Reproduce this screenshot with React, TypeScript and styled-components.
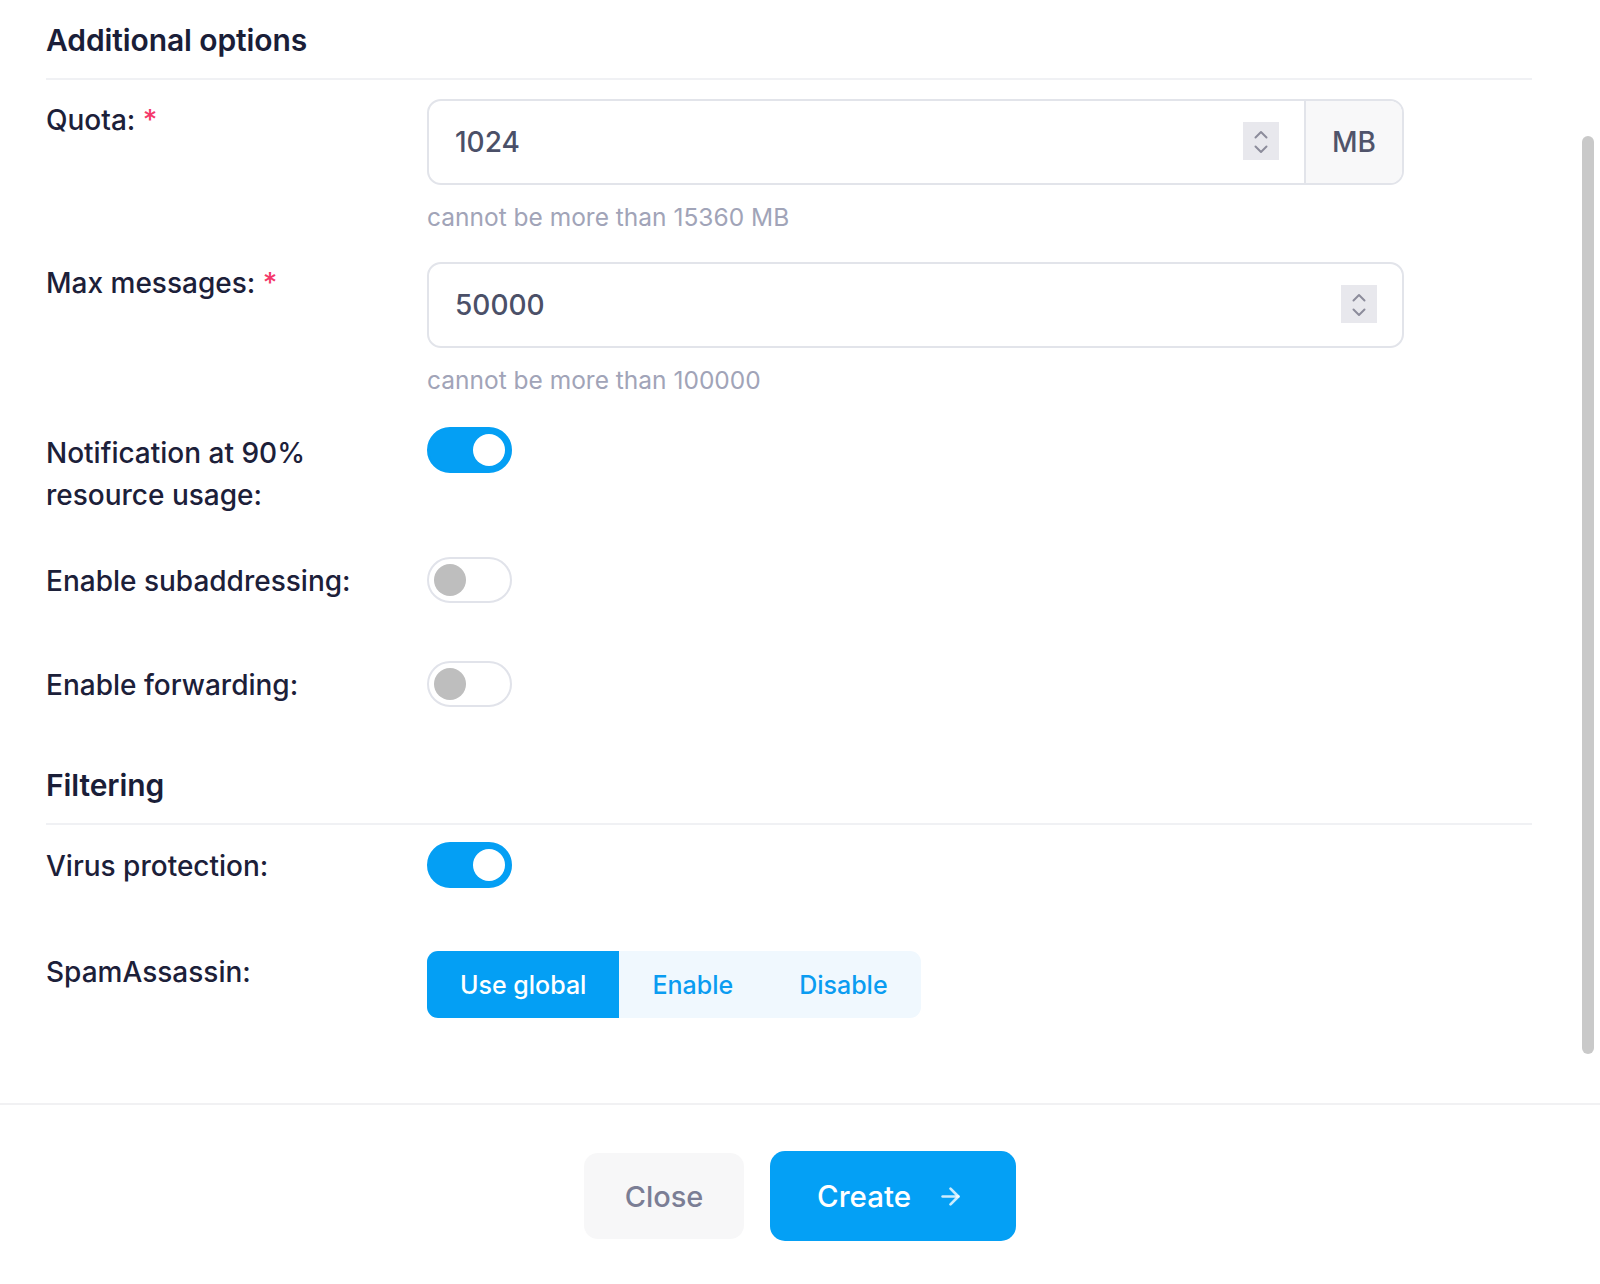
import styled, { createGlobalStyle } from "styled-components";
import { ArrowRight } from "lucide-react";

const GlobalStyle = createGlobalStyle`
  html, body {
    margin: 0;
    padding: 0;
    background: #ffffff;
  }
  body {
    font-family: Inter, "Noto Sans", sans-serif;
    color: #1b1f3b;
  }
  * {
    box-sizing: border-box;
  }
`;

function Spinner() {
  return (
    <SpinnerBox>
      <svg width="16" height="40" viewBox="0 0 16 40" fill="none">
        <path d="M2.5 16.5L8 11l5.5 5.5" stroke="#8c8c9b" strokeWidth="2" strokeLinecap="round" strokeLinejoin="round" />
        <path d="M2.5 25.5L8 31l5.5-5.5" stroke="#8c8c9b" strokeWidth="2" strokeLinecap="round" strokeLinejoin="round" />
      </svg>
    </SpinnerBox>
  );
}

function Toggle({ on }: { on: boolean }) {
  return (
    <Switch $on={on}>
      <Knob $on={on} />
    </Switch>
  );
}

function App() {
  return (
    <>
      <GlobalStyle />
      <Modal>
        <Body>
          <SectionHeader $mt={0}>Additional options</SectionHeader>

          <FormRow $mt={19}>
            <Label $pt={0}>
              Quota: <Required>*</Required>
            </Label>
            <Field>
              <InputGroup>
                <InputBox>
                  <ValueInput readOnly value="1024" />
                  <Spinner />
                </InputBox>
                <Addon>MB</Addon>
              </InputGroup>
              <Hint>cannot be more than 15360 MB</Hint>
            </Field>
          </FormRow>

          <FormRow $mt={28}>
            <Label $pt={0}>
              Max messages: <Required>*</Required>
            </Label>
            <Field>
              <InputGroup>
                <InputBox>
                  <ValueInput readOnly value="50000" />
                  <Spinner />
                </InputBox>
              </InputGroup>
              <Hint>cannot be more than 100000</Hint>
            </Field>
          </FormRow>

          <FormRow $mt={30}>
            <Label $pt={5}>Notification at 90% resource usage:</Label>
            <Field>
              <Toggle on />
            </Field>
          </FormRow>

          <FormRow $mt={41}>
            <Label $pt={3}>Enable subaddressing:</Label>
            <Field>
              <Toggle on={false} />
            </Field>
          </FormRow>

          <FormRow $mt={58}>
            <Label $pt={3}>Enable forwarding:</Label>
            <Field>
              <Toggle on={false} />
            </Field>
          </FormRow>

          <SectionHeader $mt={58}>Filtering</SectionHeader>

          <FormRow $mt={17}>
            <Label $pt={3}>Virus protection:</Label>
            <Field>
              <Toggle on />
            </Field>
          </FormRow>

          <FormRow $mt={63}>
            <Label $pt={0}>SpamAssassin:</Label>
            <Field>
              <Segmented>
                <SegmentButton $active>Use global</SegmentButton>
                <SegmentButton>Enable</SegmentButton>
                <SegmentButton>Disable</SegmentButton>
              </Segmented>
            </Field>
          </FormRow>

          <ScrollThumb />
        </Body>

        <Footer>
          <CloseButton>Close</CloseButton>
          <CreateButton>
            Create
            <ArrowRight size={27} strokeWidth={2.4} />
          </CreateButton>
        </Footer>
      </Modal>
    </>
  );
}

export default App;

const Modal = styled.div`
  width: 1600px;
  height: 1284px;
  display: flex;
  flex-direction: column;
  background: #ffffff;
`;

const Body = styled.div`
  position: relative;
  flex: 1;
  overflow: hidden;
  padding: 20px 68px 0 46px;
`;

const SectionHeader = styled.h3<{ $mt: number }>`
  margin: ${(p) => p.$mt}px 0 0;
  padding-bottom: 18px;
  border-bottom: 2px solid #f0f1f4;
  font-size: 30px;
  line-height: 40px;
  font-weight: 600;
  color: #1a1e38;
  letter-spacing: -0.1px;
`;

const FormRow = styled.div<{ $mt: number }>`
  display: grid;
  grid-template-columns: 350px 977px;
  column-gap: 31px;
  align-items: start;
  margin-top: ${(p) => p.$mt}px;
`;

const Label = styled.label<{ $pt: number }>`
  padding-top: ${(p) => p.$pt}px;
  font-size: 28px;
  line-height: 42px;
  font-weight: 500;
  color: #1c2039;
`;

const Required = styled.span`
  color: #f4386b;
`;

const Field = styled.div`
  display: flex;
  flex-direction: column;
  align-items: flex-start;
`;

const InputGroup = styled.div`
  display: flex;
  width: 977px;
  height: 86px;
  border: 2px solid #e2e4ea;
  border-radius: 14px;
  overflow: hidden;
  background: #ffffff;
`;

const InputBox = styled.div`
  flex: 1;
  display: flex;
  align-items: center;
  padding: 0 25px 0 26px;
`;

const ValueInput = styled.input`
  flex: 1;
  min-width: 0;
  border: none;
  outline: none;
  background: transparent;
  padding: 0;
  font-family: Inter, "Noto Sans", sans-serif;
  font-size: 28px;
  font-weight: 450;
  color: #4b5068;
`;

const SpinnerBox = styled.div`
  width: 36px;
  height: 38px;
  margin-top: -3px;
  display: flex;
  align-items: center;
  justify-content: center;
  background: #e8e8ed;
`;

const Addon = styled.div`
  width: 98px;
  display: flex;
  align-items: center;
  justify-content: center;
  border-left: 2px solid #e2e4ea;
  background: #f8f8f9;
  font-size: 28px;
  font-weight: 500;
  color: #50546b;
`;

const Hint = styled.div`
  margin-top: 15px;
  font-size: 24.5px;
  line-height: 34px;
  color: #a1a4b8;
`;

const Switch = styled.div<{ $on: boolean }>`
  width: 85px;
  height: 46px;
  border-radius: 23px;
  border: 2px solid ${(p) => (p.$on ? "#049ff4" : "#e1e3ea")};
  background: ${(p) => (p.$on ? "#049ff4" : "#ffffff")};
  display: flex;
  align-items: center;
  justify-content: ${(p) => (p.$on ? "flex-end" : "flex-start")};
  padding: 0 5px;
`;

const Knob = styled.div<{ $on: boolean }>`
  width: 32px;
  height: 32px;
  border-radius: 50%;
  background: ${(p) => (p.$on ? "#ffffff" : "#bebebe")};
`;

const Segmented = styled.div`
  display: flex;
  height: 67px;
  border-radius: 11px;
  overflow: hidden;
  background: #f0f8fe;
`;

const SegmentButton = styled.button<{ $active?: boolean }>`
  border: none;
  padding: 0 33px;
  font-family: Inter, "Noto Sans", sans-serif;
  font-size: 25px;
  font-weight: 500;
  background: ${(p) => (p.$active ? "#049ff4" : "transparent")};
  color: ${(p) => (p.$active ? "#ffffff" : "#0a9cf1")};
  cursor: pointer;
`;

const ScrollThumb = styled.div`
  position: absolute;
  top: 136px;
  right: 6px;
  width: 12px;
  height: 918px;
  border-radius: 6px;
  background: #c9c9c9;
`;

const Footer = styled.div`
  height: 181px;
  border-top: 2px solid #f1f1f3;
  padding-top: 3px;
  display: flex;
  align-items: center;
  justify-content: center;
  gap: 26px;
`;

const CloseButton = styled.button`
  width: 160px;
  height: 86px;
  border: none;
  border-radius: 14px;
  background: #f7f7f8;
  font-family: Inter, "Noto Sans", sans-serif;
  font-size: 29px;
  font-weight: 500;
  color: #7b7e95;
  cursor: pointer;
`;

const CreateButton = styled.button`
  height: 90px;
  display: flex;
  align-items: center;
  gap: 26px;
  padding: 0 52px 0 47px;
  border: none;
  border-radius: 15px;
  background: #04a0f5;
  font-family: Inter, "Noto Sans", sans-serif;
  font-size: 29.5px;
  font-weight: 500;
  color: #ffffff;
  cursor: pointer;

  svg {
    color: rgba(255, 255, 255, 0.8);
  }
`;
